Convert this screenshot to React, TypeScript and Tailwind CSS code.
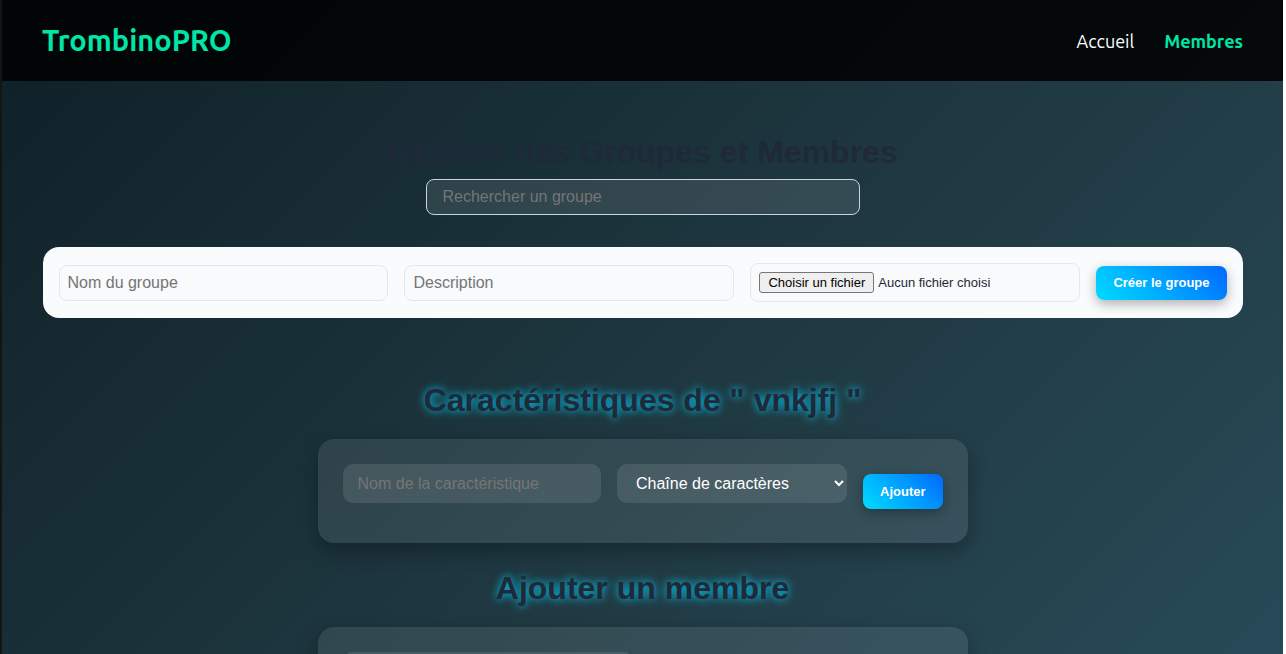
const gradientButton =
  "rounded-lg bg-linear-45 from-[#00dbff] to-[#0066ff] px-[17px] text-[13px] font-bold text-white shadow-[0_4px_12px_rgba(0,0,0,0.3)]";
const lightField =
  "min-w-0 flex-1 rounded-lg border border-[#e2e8f0] bg-[#f8fafc] px-2 placeholder:text-[#757575]";
const glassCard =
  "w-full max-w-[650px] rounded-2xl bg-white/9 p-[25px] shadow-[0_8px_20px_rgba(0,0,0,0.3)]";
const glassField =
  "rounded-[10px] bg-white/10 px-[15px] text-white placeholder:text-[#757575]";
const glowTitle =
  "text-center text-[32px] leading-10 font-bold [text-shadow:0_0_8px_#00d2ff]";

function Header() {
  return (
    <header className="flex h-[81px] items-center justify-between bg-black/85 px-10 font-[Ubuntu,'Noto_Sans',sans-serif]">
      <a href="#" className="text-[29px] font-bold text-[#00e6a8]">
        TrombinoPRO
      </a>
      <nav className="flex items-center gap-[30px] text-lg">
        <a href="#accueil" className="text-white">
          Accueil
        </a>
        <a href="#membres" className="font-bold text-[#00e6a8]">
          Membres
        </a>
      </nav>
    </header>
  );
}

function GroupForm() {
  return (
    <form className="mt-8 flex w-full items-center gap-4 rounded-2xl bg-[#fafbfd] p-4">
      <input type="text" aria-label="Nom du groupe" placeholder="Nom du groupe" className={`${lightField} h-9`} />
      <input type="text" aria-label="Description" placeholder="Description" className={`${lightField} h-9`} />
      <div className={`${lightField} flex h-[39px] items-center gap-1 text-[13px]`}>
        <button
          type="button"
          className="h-[21px] shrink-0 rounded-[3px] border border-[#767676] bg-[#efefef] px-2 leading-[18px] text-black"
        >
          Choisir un fichier
        </button>
        <span className="truncate">Aucun fichier choisi</span>
      </div>
      <button type="button" className={`${gradientButton} h-[34px] shrink-0`}>
        Créer le groupe
      </button>
    </form>
  );
}

export default function App() {
  return (
    <div className="h-screen overflow-hidden border-r-[3px] border-l-2 border-r-white border-l-[#141414] bg-[#0f2027] bg-[linear-gradient(135deg,#0f2027,#203a43,#2c5364)] bg-[length:100%_1080px] font-['Liberation_Sans',Arial,sans-serif] text-base text-[#1f2937]">
      <Header />
      <main className="mx-auto flex max-w-[1280px] flex-col items-center px-10 pt-[51px]">
        <h1 className="text-center text-[32px] leading-10 font-bold">Gestion des Groupes et Membres</h1>
        <input
          type="search"
          aria-label="Rechercher un groupe"
          placeholder="Rechercher un groupe"
          className="mt-[7px] h-9 w-full max-w-[434px] rounded-lg border border-[#cbd5e1] bg-white/10 px-4 text-white placeholder:text-[#757575]"
        />
        <GroupForm />

        <h2 className={`${glowTitle} mt-[62px]`}>Caractéristiques de " vnkjfj "</h2>
        <form className={`${glassCard} mt-[19px] flex h-[104px] items-start gap-4`}>
          <input
            type="text"
            aria-label="Nom de la caractéristique"
            placeholder="Nom de la caractéristique"
            className={`${glassField} h-[39px] min-w-0 flex-1`}
          />
          <select aria-label="Type de la caractéristique" className={`${glassField} h-[39px] w-[230px]`}>
            <option className="text-black">Chaîne de caractères</option>
            <option className="text-black">Nombre</option>
            <option className="text-black">Date</option>
          </select>
          <button type="button" className={`${gradientButton} mt-[10px] h-[35px]`}>
            Ajouter
          </button>
        </form>

        <h2 className={`${glowTitle} mt-[25px]`}>Ajouter un membre</h2>
        <form className={`${glassCard} mt-[19px] h-52`}>
          <input type="text" aria-label="Nom du membre" className={`${glassField} h-[39px] w-[290px]`} />
        </form>
      </main>
    </div>
  );
}
